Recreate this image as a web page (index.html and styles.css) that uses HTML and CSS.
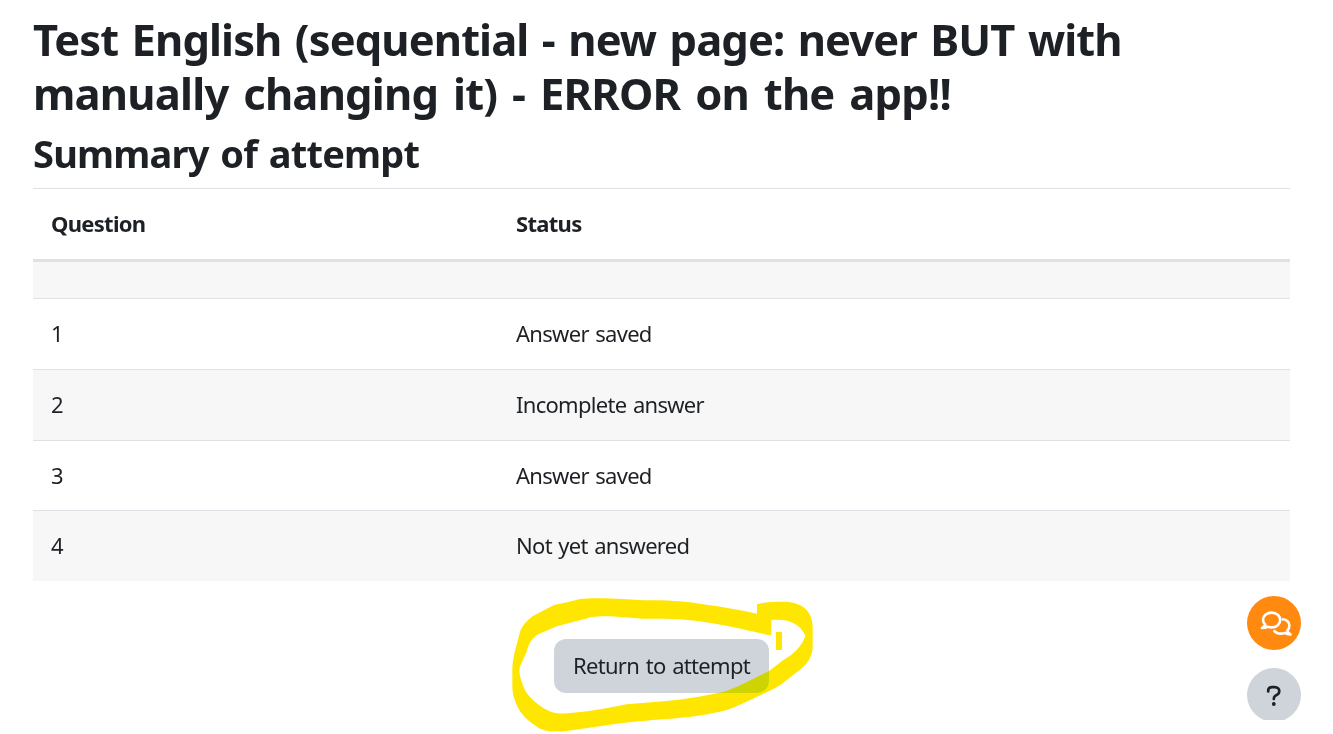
FILE: index.html
```html
<!DOCTYPE html>
<html lang="en">
  <head>
    <meta charset="UTF-8">
    <title>Summary of attempt</title>
    <link rel="stylesheet" href="styles.css">
  </head>
  <body>
    <main class="main">
        <h1>
            <span class="line">Test English (sequential - new page: never BUT with</span>
            <span class="line second">manually changing it) - ERROR on the app!!</span>
        </h1>
        <h2>Summary of attempt</h2>

        <table class="summary">
            <thead>
                <tr><th class="question">Question</th><th>Status</th></tr>
            </thead>
            <tbody>
                <tr class="heading"><td colspan="2"></td></tr>
                <tr><td>1</td><td>Answer saved</td></tr>
                <tr><td>2</td><td>Incomplete answer</td></tr>
                <tr class="short"><td>3</td><td>Answer saved</td></tr>
                <tr><td>4</td><td>Not yet answered</td></tr>
            </tbody>
        </table>

        <div class="controls">
            <button class="btn" type="button">Return to attempt</button>
            <svg class="marker" viewBox="0 0 990 447">
                <path fill-rule="evenodd" d="M771 58Q790 50 850 50C905 50 938 78 938 125V185C938 215 920 240 895 258L845 297C820 315 780 330 740 350L690 372C640 388 560 398 500 402C440 407 400 409 340 418L200 438C170 442 135 440 115 428C85 410 60 385 50 360C40 335 37 325 37 300V255C37 220 50 180 60 140C66 120 90 98 100 92L162 60L205 51L240 42C270 38 330 40 370 42L430 46C520 45 560 50 620 59C670 66 720 74 771 86Z
                    M814 150L800 149C700 125 600 103 500 101H430L370 97C330 93 300 93 275 96L245 104L170 124L110 150C92 165 85 180 80 200L60 245Q56 262 62 280C70 310 80 330 105 350C140 380 165 388 200 385C250 383 320 370 380 358L500 348C560 343 600 335 665 322C720 305 760 280 807 258L850 225C880 208 905 185 916 152C900 115 865 104 835 104H814Z"/>
                <path d="M828 141h18v54h-18z"/>
            </svg>
        </div>
    </main>

    <div class="floating">
        <button class="round chat" type="button" aria-label="Messages">
            <svg viewBox="0 0 32 28" width="32" height="28">
                <path d="M11.700 2.600C6.700 2.600 3 5.800 3 9.600c0 2 .9 3.700 2.200 4.900-.4 1.300-1.500 2.500-3.200 3.500 2.200 0 4.200-.3 5.700-1.300 1.300.5 2.600.7 4 .7 5 0 8.500-3.400 8.500-7.400s-3.500-7.400-8.500-7.400z"/>
                <path d="M21.800 9.200c4.700-.2 7.600 2.800 7.600 6.300 0 2-.8 3.700-2.100 5 .4 1.500 1.400 2.900 3.200 3.900-2.100 0-3.900-.4-5.500-1.500-4.500 1.300-9 .6-11.200-2.700"/>
            </svg>
        </button>
        <button class="round help" type="button" aria-label="Help">
            <svg viewBox="0 0 16 22" width="16" height="22">
                <path d="M2.200 6.400V5.800C2.200 3.500 4 2.200 6.300 2.200h2.500c2.600 0 4.500 1.800 4.500 4 0 1.500-.7 2.600-2 3.400L9.200 10.900C8.200 11.500 7.800 12.200 7.800 14"/>
                <circle cx="7.800" cy="19" r="1.900"/>
            </svg>
        </button>
    </div>
  </body>
</html>
```
FILE: styles.css
```css
* { box-sizing: border-box; }
html, body { padding: 0; margin: 0; }
body {
    background: #FFF;
    color: #1D2125;
    font: 22px/34px "Noto Sans", sans-serif;
    letter-spacing: -0.7px;
    word-spacing: 1.4px;
    height: 734px;
    overflow: hidden;
}
.main {
    width: 1257px;
    margin-left: 33px;
    padding-top: 12px;
}
h1, h2 { margin: 0; font-weight: 700; white-space: nowrap; }
h1 {
    font-size: 43.5px;
    line-height: 54px;
    letter-spacing: -0.9px;
    word-spacing: 3px;
}
.line { display: block; }
.second {
    letter-spacing: -0.8px;
    word-spacing: 4.3px;
}
h2 {
    font-size: 38px;
    line-height: 46px;
    padding-top: 10px;
    height: 68px;
    letter-spacing: -0.8px;
    word-spacing: 2.6px;
}
.summary {
    width: 100%;
    border-collapse: separate;
    border-spacing: 0;
    table-layout: fixed;
}
.summary th, .summary td {
    height: 71px;
    padding: 0 18px 2px;
    border-top: 1px solid #DEE2E6;
    text-align: left;
    vertical-align: middle;
}
.summary th {
    height: 74px;
    border-bottom: 3px solid #DEE2E6;
}
.summary .question { width: 465px; }
.summary .heading td { height: 36px; border-top: 0; }
.summary .short td { height: 70px; }
.summary tbody tr:nth-child(odd) { background: #F7F7F7; }
.controls {
    position: relative;
    display: flex;
    justify-content: center;
    padding-top: 58px;
}
.btn {
    width: 215px;
    height: 54px;
    padding: 0 0 2px;
    border: 0;
    border-radius: 12px;
    background: #CED4DA;
    color: inherit;
    font: inherit;
    letter-spacing: inherit;
    word-spacing: 1.6px;
    white-space: nowrap;
}
/* highlighter ring lies over the button */
.marker {
    position: absolute;
    left: 467px;
    top: 4px;
    width: 330px;
    height: 149px;
    fill: #FFE600;
    mix-blend-mode: darken;
    pointer-events: none;
}
.floating {
    position: fixed;
    top: 596px;
    right: 32px;
    height: 124px;
    overflow: hidden;
    display: flex;
    flex-direction: column;
    gap: 18px;
}
.round {
    display: flex;
    flex-shrink: 0;
    align-items: center;
    justify-content: center;
    width: 54px;
    height: 54px;
    padding: 0;
    border: 0;
    border-radius: 50%;
}
.chat { background: #FF8A0F; }
.chat svg {
    margin: 2px 0 0 4px;
    fill: none;
    stroke: #FFF;
    stroke-width: 2.6;
    stroke-linejoin: round;
}
.help { background: #CED4DA; }
.help svg { margin-top: 2px; }
.help path {
    fill: none;
    stroke: #1D2125;
    stroke-width: 2.7;
    stroke-linecap: round;
}
.help circle { fill: #1D2125; }
```
